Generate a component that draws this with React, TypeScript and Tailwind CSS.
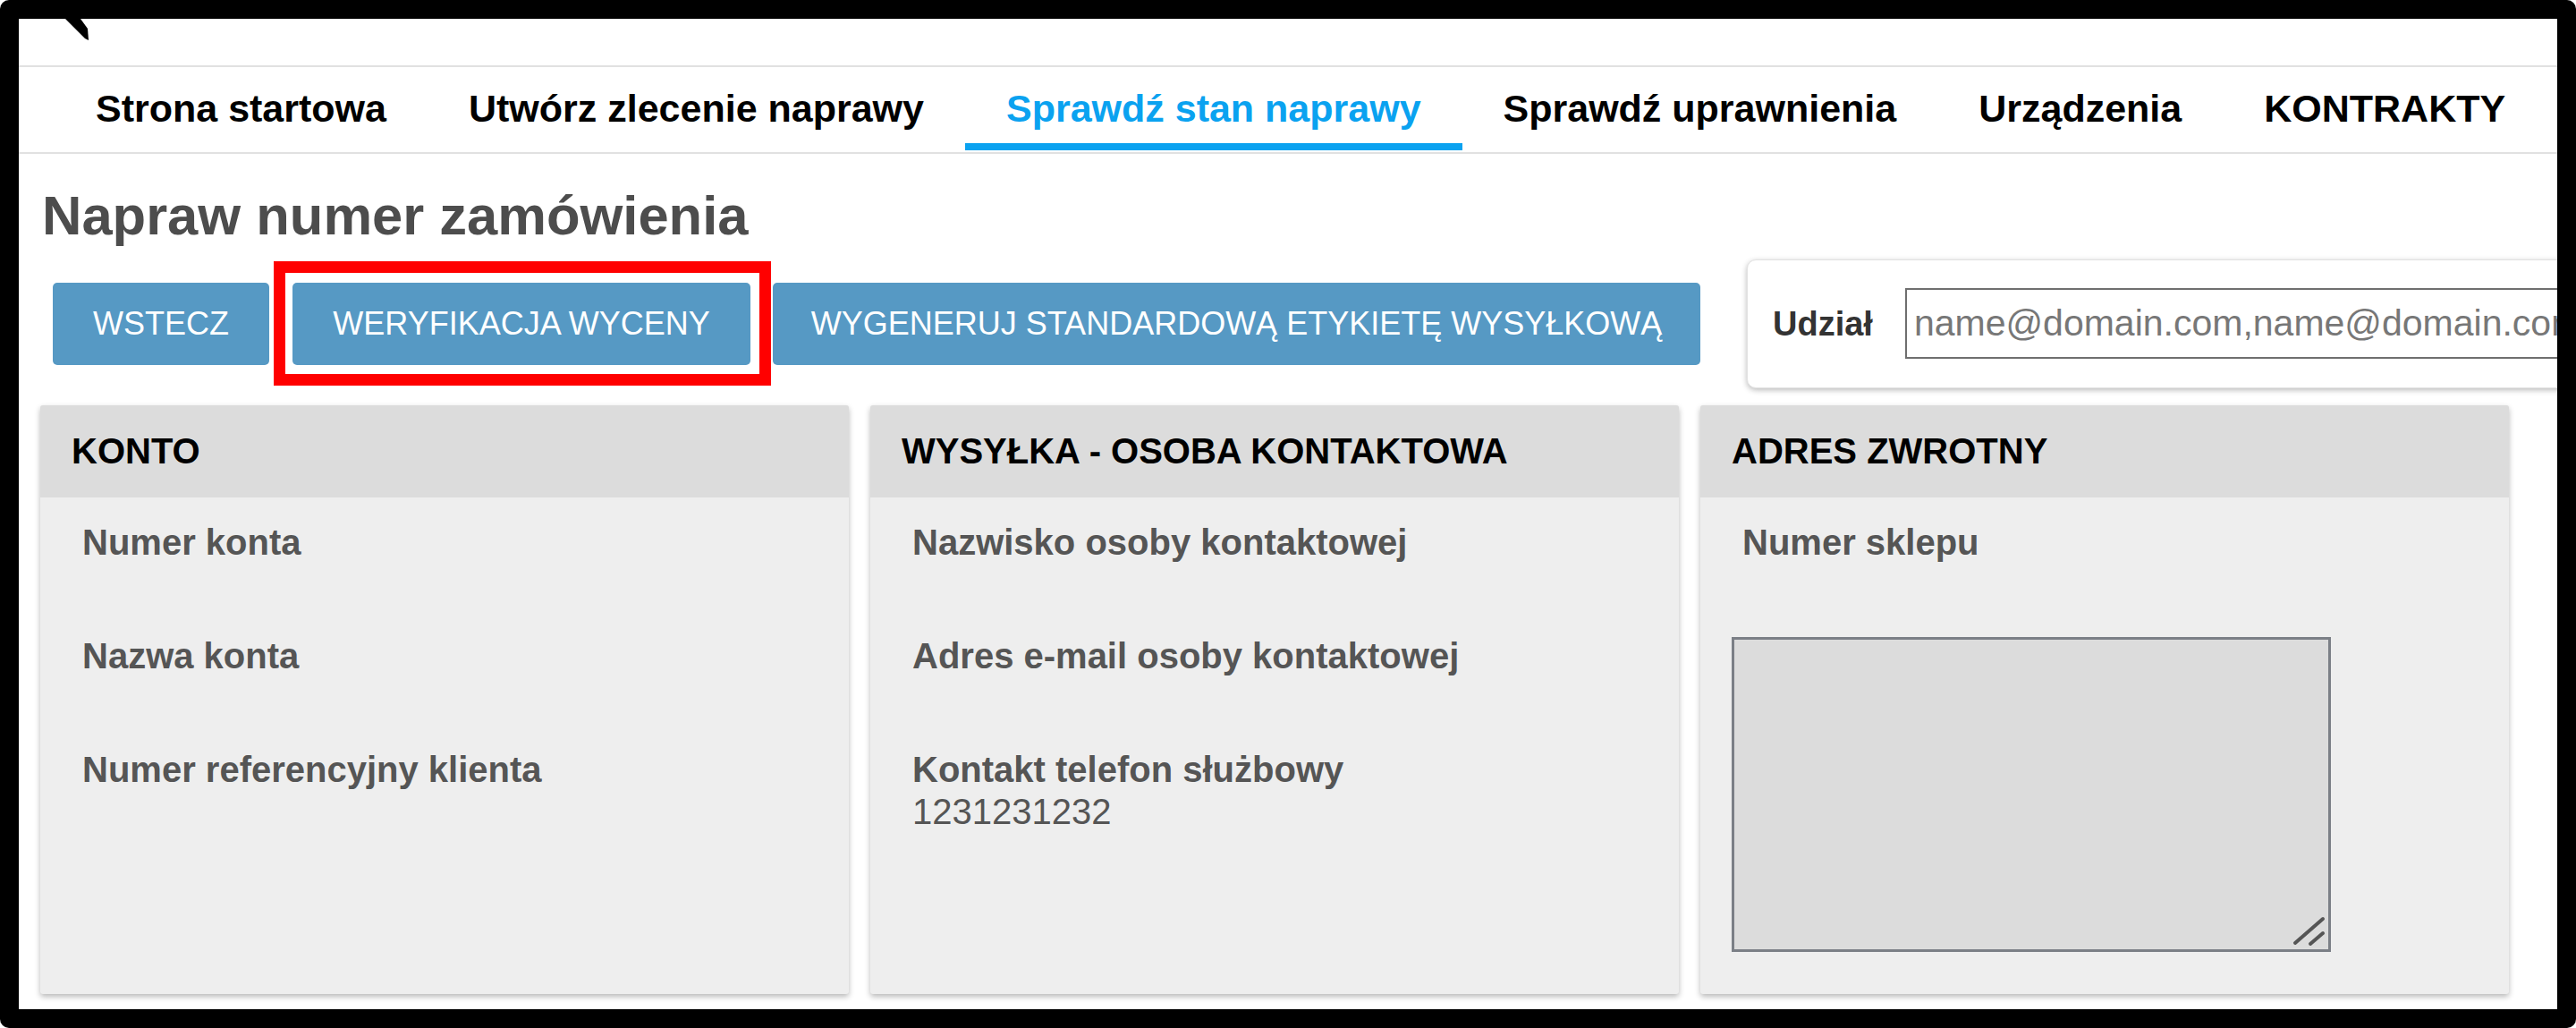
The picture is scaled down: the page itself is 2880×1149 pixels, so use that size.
import React from 'react';

type Field = { label: string; value?: string };

const tabs = [
  { label: 'Strona startowa' },
  { label: 'Utwórz zlecenie naprawy' },
  { label: 'Sprawdź stan naprawy', active: true },
  { label: 'Sprawdź uprawnienia' },
  { label: 'Urządzenia' },
  { label: 'KONTRAKTY' },
];

const accountFields: Field[] = [
  { label: 'Numer konta' },
  { label: 'Nazwa konta' },
  { label: 'Numer referencyjny klienta' },
];

const contactFields: Field[] = [
  { label: 'Nazwisko osoby kontaktowej' },
  { label: 'Adres e-mail osoby kontaktowej' },
  { label: 'Kontakt telefon służbowy', value: '1231231232' },
];

const Card: React.FC<{ title: string; children: React.ReactNode }> = ({ title, children }) => (
  <section className="w-[904px] h-[658px] shrink-0 flex flex-col bg-[#eeeeee] rounded-[3px] shadow-[0_3px_6px_rgba(0,0,0,0.28)]">
    <header className="h-[103px] shrink-0 flex items-center px-[35px] bg-[#dcdcdc] rounded-t-[3px]">
      <h2 className="text-[40px] font-bold text-black leading-none">{title}</h2>
    </header>
    <div className="flex-1 pt-[27px] px-[47px]">{children}</div>
  </section>
);

const FieldList: React.FC<{ fields: Field[] }> = ({ fields }) => (
  <>
    {fields.map((f) => (
      <div key={f.label} className="h-[127px]">
        <div className="text-[40px] leading-[47px] font-bold text-[#555555]">{f.label}</div>
        {f.value && <div className="text-[40px] leading-[47px] text-[#555555]">{f.value}</div>}
      </div>
    ))}
  </>
);

const Button: React.FC<{ label: string; width: string }> = ({ label, width }) => (
  <button
    className={`${width} h-[92px] shrink-0 flex items-center justify-center rounded-[5px] bg-[#5699c4] text-white text-[36px] leading-none`}
  >
    {label}
  </button>
);

export default function App() {
  return (
    <div className="w-[2880px] h-[1149px] bg-black p-[21px] rounded-[10px] font-['Liberation_Sans',Arial,sans-serif]">
      <div className="relative w-full h-full bg-white overflow-hidden">
        {/* leftover corner of a cropped pointer */}
        <svg className="absolute left-[50px] top-0" width="32" height="28" viewBox="0 0 32 28">
          <polygon points="2,0 19,0 27,11 28,24 24,22" fill="#000" />
        </svg>

        <div className="h-[52px]" />

        {/* main navigation */}
        <nav className="h-[99px] flex border-y-2 border-[#e1e1e1] pl-[40px]">
          {tabs.map((t) => (
            <div key={t.label} className="h-full flex flex-col px-[46px]">
              <div
                className={`flex-1 flex items-center pt-[8px] text-[43px] font-bold leading-none whitespace-nowrap ${
                  t.active ? 'text-[#0aa2f0]' : 'text-black'
                }`}
              >
                {t.label}
              </div>
              <div className={`h-[8px] mb-[2px] -mx-[46px] ${t.active ? 'bg-[#0aa2f0]' : ''}`} />
            </div>
          ))}
        </nav>

        <main className="px-[24px]">
          <h1 className="mt-[38px] pl-[2px] text-[61.5px] leading-none font-bold text-[#4d4d4d]">
            Napraw numer zamówienia
          </h1>

          <div className="mt-[18px] h-[144px] flex items-center pl-[14px]">
            <Button label="WSTECZ" width="w-[242px]" />
            <div className="relative ml-[26px]">
              <Button label="WERYFIKACJA WYCENY" width="w-[512px]" />
              <span className="pointer-events-none absolute -left-[21px] -right-[23px] -top-[24px] -bottom-[23px] border-[13px] border-[#ff0000]" />
            </div>
            <div className="ml-[25px]">
              <Button label="WYGENERUJ STANDARDOWĄ ETYKIETĘ WYSYŁKOWĄ" width="w-[1037px]" />
            </div>

            {/* share box, runs on past the right edge */}
            <div className="ml-[52px] w-[1000px] h-[144px] shrink-0 flex items-center pl-[28px] bg-white border border-[#e2e2e2] rounded-[10px] shadow-[0_2px_6px_rgba(0,0,0,0.28)]">
              <label className="text-[38px] font-bold text-[#333333] leading-none">Udział</label>
              <div className="ml-[36px] w-[820px] h-[79px] shrink-0 flex items-center px-[8px] border-2 border-[#6f6f6f] bg-white overflow-hidden">
                <span className="text-[41px] leading-none text-[#777777] whitespace-nowrap">
                  name@domain.com,name@domain.com
                </span>
              </div>
            </div>
          </div>

          <div className="mt-[19px] flex gap-[24px]">
            <Card title="KONTO">
              <FieldList fields={accountFields} />
            </Card>
            <Card title="WYSYŁKA - OSOBA KONTAKTOWA">
              <FieldList fields={contactFields} />
            </Card>
            <Card title="ADRES ZWROTNY">
              <div className="text-[40px] leading-[47px] font-bold text-[#555555]">Numer sklepu</div>
              <div className="relative mt-[82px] -ml-[12px] w-[670px] h-[352px] bg-[#dcdcdc] border-[3px] border-[#7b7f86]">
                <svg className="absolute right-0 bottom-0" width="40" height="40" viewBox="0 0 40 40">
                  <line x1="34" y1="6" x2="3" y2="33" stroke="#555" strokeWidth="4" strokeLinecap="round" />
                  <line x1="34" y1="22" x2="20" y2="34" stroke="#555" strokeWidth="4" strokeLinecap="round" />
                </svg>
              </div>
            </Card>
          </div>
        </main>
      </div>
    </div>
  );
}
